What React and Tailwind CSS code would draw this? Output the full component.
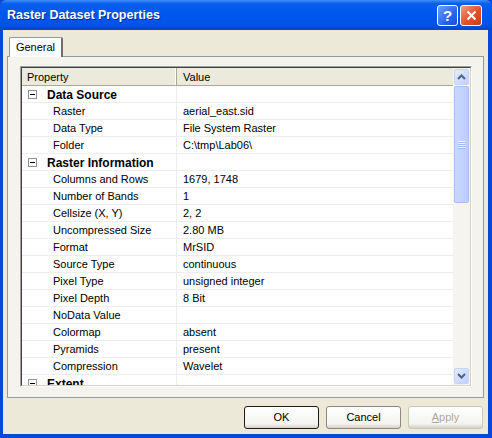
import React from "react";

const rows = [
  { g: "Data Source" },
  { p: "Raster", v: "aerial_east.sid" },
  { p: "Data Type", v: "File System Raster" },
  { p: "Folder", v: "C:\\tmp\\Lab06\\" },
  { g: "Raster Information" },
  { p: "Columns and Rows", v: "1679, 1748" },
  { p: "Number of Bands", v: "1" },
  { p: "Cellsize (X, Y)", v: "2, 2" },
  { p: "Uncompressed Size", v: "2.80 MB" },
  { p: "Format", v: "MrSID" },
  { p: "Source Type", v: "continuous" },
  { p: "Pixel Type", v: "unsigned integer" },
  { p: "Pixel Depth", v: "8 Bit" },
  { p: "NoData Value", v: "" },
  { p: "Colormap", v: "absent" },
  { p: "Pyramids", v: "present" },
  { p: "Compression", v: "Wavelet" },
  { g: "Extent" },
];

function Minus() {
  return (
    <span className="w-[9px] h-[9px] border border-[#919191] bg-white flex items-center justify-center">
      <span className="w-[5px] h-px bg-black" />
    </span>
  );
}

function Btn({ children, def, disabled }) {
  return (
    <div
      className={
        "w-[75px] h-[23px] rounded-[3px] flex items-center justify-center bg-[linear-gradient(to_bottom,#ffffff,#f3f3ef_80%,#d6d0c5)] " +
        (def
          ? "border border-[#1c1c1c] "
          : disabled
          ? "border border-[#c9c7ba] text-[#aca899] [text-shadow:1px_1px_0_#ffffff] "
          : "border border-[#8a8a80] ") +
        (disabled ? "" : "text-black")
      }
    >
      {children}
    </div>
  );
}

export default function App() {
  return (
    <div
      className="w-[492px] h-[438px] flex flex-col bg-[#0a46d8] text-[11px] leading-none overflow-hidden"
      style={{ fontFamily: '"Liberation Sans", Arial, sans-serif' }}
    >
      {/* Title bar */}
      <div className="h-[30px] shrink-0 flex items-center pl-[7px] pr-[10px] bg-[linear-gradient(to_bottom,#3d8ff8_0%,#0a5fec_12%,#0058ee_40%,#0054e6_80%,#0046cc_100%)] rounded-t-[6px]">
        <span className="text-white font-bold text-[12.5px] [text-shadow:1px_1px_0_#0a2a8a]">
          Raster Dataset Properties
        </span>
        <div className="ml-auto flex gap-[2px]">
          <div className="w-[21px] h-[21px] rounded-[3px] border border-white bg-[linear-gradient(135deg,#6aa2ff,#2a64f0_60%,#1a4fd8)] flex items-center justify-center text-white font-bold text-[15px]">
            ?
          </div>
          <div className="w-[22px] h-[21px] rounded-[3px] border border-white bg-[linear-gradient(135deg,#f39a7a,#e2512a_55%,#c83c18)] flex items-center justify-center">
            <svg width="11" height="11" viewBox="0 0 11 11">
              <path d="M1.5 1.5 L9.5 9.5 M9.5 1.5 L1.5 9.5" stroke="white" strokeWidth="2" />
            </svg>
          </div>
        </div>
      </div>

      {/* Body */}
      <div className="flex-1 ml-[3px] mr-[4px] mb-[4px] bg-[#ece9d8] flex flex-col">
        {/* tab strip */}
        <div className="h-[26px] shrink-0 flex items-end pl-[6px]">
          <div className="h-[20px] w-[54px] bg-[#fcfcfe] border border-b-0 border-[#919b9c] border-r-[#6f6f6f] border-r-2 rounded-t-[2px] flex items-center justify-center text-black -mb-px relative z-10">
            General
          </div>
        </div>
        {/* panel */}
        <div className="ml-[4px] w-[477px] h-[342px] border border-[#919b9c] bg-[#f4f3ee] pt-[9px] pl-[12px]">
          {/* list */}
          <div className="w-[452px] h-[321px] border border-[#a0a0a0] border-r-white border-b-white flex">
            <div className="flex-1 border border-[#404040] border-r-[#d4d0c8] border-b-[#d4d0c8] flex bg-white">
              <div className="flex-1 flex flex-col overflow-hidden">
                {/* header */}
                <div className="h-[18px] shrink-0 flex bg-[#ebeadb] border-b border-[#aca899]">
                  <div className="w-[155px] h-full flex items-center pl-[5px] pt-px border-r border-[#aca899] shadow-[inset_-1px_0_0_#ffffff]">
                    Property
                  </div>
                  <div className="flex-1 h-full flex items-center pl-[6px] pt-px">Value</div>
                </div>
                {rows.map((r, i) => (
                  <div key={i} className="h-[17px] shrink-0 flex border-b border-[#ededed]">
                    <div className="w-[155px] h-full flex items-center pt-px border-r border-[#ededed]">
                      {r.g ? (
                        <>
                          <span className="ml-[6px]"><Minus /></span>
                          <span className="ml-[10px] font-bold text-[12px]">{r.g}</span>
                        </>
                      ) : (
                        <span className="ml-[31px]">{r.p}</span>
                      )}
                    </div>
                    <div className="flex-1 h-full flex items-center pt-px pl-[6px]">{r.g ? "" : r.v}</div>
                  </div>
                ))}
              </div>
              {/* scrollbar */}
              <div className="w-[17px] shrink-0 flex flex-col bg-[#f5f4ef] pt-px pb-px">
                <div className="h-[16px] mx-px rounded-[2px] border border-[#c4d4f8] bg-[linear-gradient(135deg,#e4ecfe,#bed0fb)] flex items-center justify-center">
                  <svg width="9" height="6" viewBox="0 0 9 6">
                    <path d="M1 5 L4.5 1.5 L8 5" stroke="#4d6185" strokeWidth="2" fill="none" />
                  </svg>
                </div>
                <div className="h-[117px] mt-[1px] mx-px rounded-[2px] border border-[#a9bff0] bg-[linear-gradient(to_right,#c9d8fc,#bccffb)] flex flex-col items-center justify-center gap-[1px]">
                  {[0, 1, 2, 3].map((k) => (
                    <span key={k} className="w-[7px] h-px bg-[#eef3fe] shadow-[0_1px_0_#a4b9ef]" />
                  ))}
                </div>
                <div className="flex-1" />
                <div className="h-[16px] mx-px rounded-[2px] border border-[#c4d4f8] bg-[linear-gradient(135deg,#e4ecfe,#bed0fb)] flex items-center justify-center">
                  <svg width="9" height="6" viewBox="0 0 9 6">
                    <path d="M1 1 L4.5 4.5 L8 1" stroke="#4d6185" strokeWidth="2" fill="none" />
                  </svg>
                </div>
              </div>
            </div>
          </div>
        </div>
        {/* buttons */}
        <div className="flex justify-end gap-[7px] mt-[8px] pr-[5px]">
          <Btn def>OK</Btn>
          <Btn>Cancel</Btn>
          <Btn disabled>
            <span><u>A</u>pply</span>
          </Btn>
        </div>
      </div>
    </div>
  );
}
